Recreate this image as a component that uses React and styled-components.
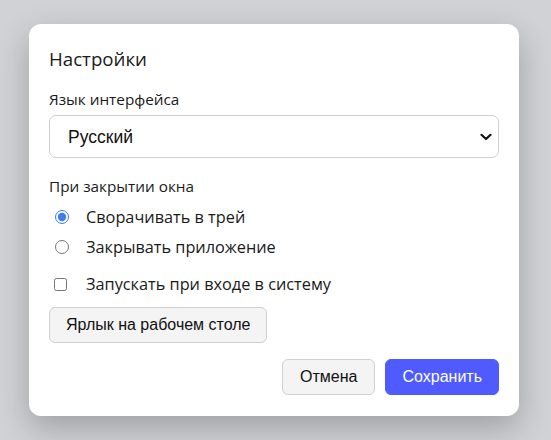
import React from "react";
import styled, { createGlobalStyle } from "styled-components";

const Global = createGlobalStyle`
  html, body { margin: 0; padding: 0; }
  body {
    background: #d1d2d6;
    font-family: "Open Sans", "Noto Sans", sans-serif;
    color: #1a1a1a;
  }
`;

const Page = styled.div`
  min-height: 100vh;
  box-sizing: border-box;
  padding-right: 3px;
  display: flex;
  align-items: center;
  justify-content: center;
`;

const Dialog = styled.div`
  width: 490px;
  box-sizing: border-box;
  background: #fff;
  border-radius: 12px;
  padding: 22px 20px 21px;
  box-shadow: 0 12px 32px rgba(0, 0, 0, 0.24);
  display: flex;
  flex-direction: column;
`;

const Title = styled.h2`
  margin: 0 0 17px;
  font-size: 18.7px;
  font-weight: 400;
  line-height: 26px;
`;

const FieldLabel = styled.div`
  font-size: 15.3px;
  line-height: 20px;
  margin-top: ${(p) => p.$top || 0}px;
  margin-bottom: ${(p) => p.$bottom || 0}px;
`;

const SelectWrap = styled.div`
  position: relative;
`;

const Select = styled.select`
  width: 100%;
  height: 43px;
  box-sizing: border-box;
  appearance: none;
  -webkit-appearance: none;
  border: 1px solid #cfcfcf;
  border-radius: 7px;
  background: #fff;
  padding: 0 30px 0 18px;
  font-family: "Liberation Sans", Arial, sans-serif;
  font-size: 17.5px;
  color: #111;
`;

const Chevron = styled.svg`
  position: absolute;
  right: 7px;
  top: 50%;
  width: 12px;
  height: 8px;
  margin-top: -4px;
  pointer-events: none;
`;

const OptionRow = styled.label`
  display: flex;
  align-items: center;
  height: 30px;
  font-size: 16.3px;
  cursor: pointer;
  margin-top: ${(p) => p.$top || 0}px;
`;

const Radio = styled.input.attrs({ type: "radio" })`
  width: 14px;
  height: 14px;
  margin: 0 17px 0 6px;
  accent-color: #3f7cf3;
`;

const Check = styled.input.attrs({ type: "checkbox" })`
  width: 13px;
  height: 13px;
  margin: 0 19px 0 5px;
`;

const Button = styled.button`
  height: 36px;
  box-sizing: border-box;
  padding: 0 ${(p) => (p.$primary ? 16 : p.$wide ? 16 : 17)}px;
  border-radius: 6px;
  font-family: "Liberation Sans", Arial, sans-serif;
  font-size: 16px;
  border: 1px solid ${(p) => (p.$primary ? "#4f5bff" : "#cfcfcf")};
  background: ${(p) => (p.$primary ? "#4f5bff" : "#f4f4f4")};
  color: ${(p) => (p.$primary ? "#fff" : "#111")};
  cursor: pointer;
`;

const ShortcutRow = styled.div`
  display: flex;
  margin-top: 8px;
`;

const Footer = styled.div`
  display: flex;
  justify-content: flex-end;
  gap: 10px;
  margin-top: 16px;
`;

export default function App() {
  return (
    <>
      <Global />
      <Page>
        <Dialog>
          <Title>Настройки</Title>
          <FieldLabel $bottom={6}>Язык интерфейса</FieldLabel>
          <SelectWrap>
            <Select defaultValue="ru">
              <option value="ru">Русский</option>
              <option value="en">English</option>
            </Select>
            <Chevron viewBox="0 0 12 8">
              <path d="M1.5 1.8 L6 6 L10.5 1.8" fill="none" stroke="#111" strokeWidth="2.2" strokeLinecap="round" strokeLinejoin="round" />
            </Chevron>
          </SelectWrap>
          <FieldLabel $top={18} $bottom={6}>При закрытии окна</FieldLabel>
          <OptionRow>
            <Radio name="close" defaultChecked />
            Сворачивать в трей
          </OptionRow>
          <OptionRow>
            <Radio name="close" />
            Закрывать приложение
          </OptionRow>
          <OptionRow $top={7}>
            <Check />
            Запускать при входе в систему
          </OptionRow>
          <ShortcutRow>
            <Button $wide>Ярлык на рабочем столе</Button>
          </ShortcutRow>
          <Footer>
            <Button>Отмена</Button>
            <Button $primary>Сохранить</Button>
          </Footer>
        </Dialog>
      </Page>
    </>
  );
}
